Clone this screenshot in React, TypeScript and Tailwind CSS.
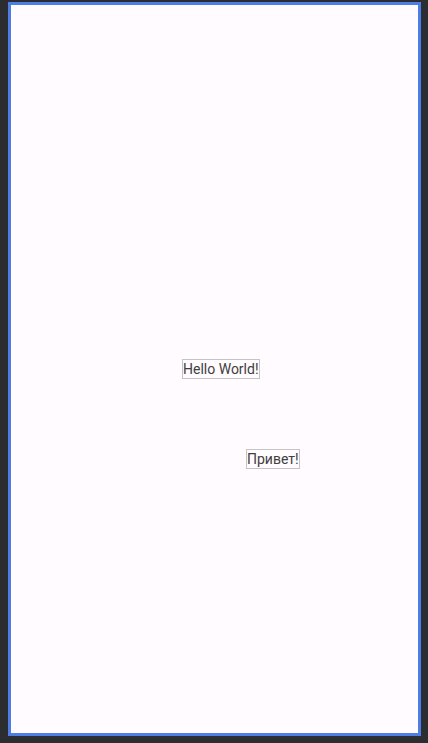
export default function App() {
  return (
    <div className="w-[428px] h-[743px] bg-[#2b2d30] pt-[2px] pl-[8px]">
      <div className="w-[413px] h-[734px] border-[3px] border-[#4d7ee8] bg-[#fffbfe]">
        <div className="flex flex-col items-start pt-[354px] font-['Roboto',sans-serif] text-[14px] leading-[18px] text-[#404040]">
          <span className="ml-[171px] border border-[#c4c4c4]">Hello World!</span>
          <span className="ml-[235px] mt-[70px] border border-[#c4c4c4]">Привет!</span>
        </div>
      </div>
    </div>
  );
}
